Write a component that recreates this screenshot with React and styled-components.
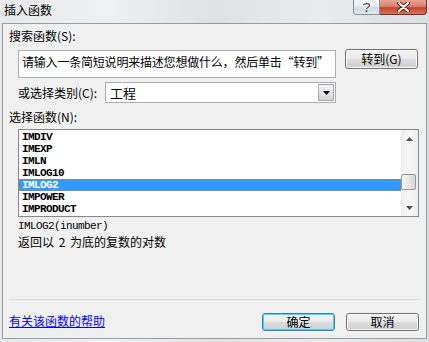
import React from 'react';
import styled, { createGlobalStyle } from 'styled-components';

const GlobalStyle = createGlobalStyle`
    html, body {
        margin: 0;
        padding: 0;
        width: 429px;
        height: 342px;
        overflow: hidden;
        background: #e3e6e9;
        font-family: "Noto Sans CJK SC", "Liberation Sans", sans-serif;
        font-size: 12px;
        color: #000;
    }
`;

const Window = styled.div`
    width: 429px;
    height: 342px;
    display: flex;
    flex-direction: column;
    background: linear-gradient(90deg, #e6e8ea 0%, #eef0f1 25%, #dfe2e5 50%, #e9ebec 75%, #dadee2 100%);
`;

const TitleBar = styled.div`
    height: 23px;
    display: flex;
    justify-content: space-between;
    align-items: flex-start;
    flex-shrink: 0;
`;

const Title = styled.div`
    padding: 3px 0 0 4px;
    line-height: 14px;
    font-size: 12px;
`;

const Caption = styled.div`
    display: flex;
    margin-right: 2px;
`;

const CaptionButton = styled.div`
    height: 15px;
    width: ${({ $w }) => $w}px;
    box-sizing: border-box;
    display: flex;
    align-items: center;
    justify-content: center;
    border: 1px solid ${({ $close }) => ($close ? '#7a2a22' : '#8c9299')};
    border-top: none;
    border-left-width: ${({ $close }) => ($close ? '0' : '1px')};
    border-radius: ${({ $close }) => ($close ? '0 0 4px 0' : '0 0 0 4px')};
    background: ${({ $close }) =>
        $close
            ? 'linear-gradient(180deg, #e5a393 0%, #d8826f 45%, #c8442f 55%, #d3735a 100%)'
            : 'linear-gradient(180deg, #f4f6f8 0%, #e8ecf0 45%, #d5dbe1 55%, #e3e8ed 100%)'};
`;

const Panel = styled.div`
    flex: 1;
    margin: 0 2px 3px 2px;
    border: 1px solid #9c9c9c;
    background: #f0f0f0;
    display: flex;
    flex-direction: column;
`;

const Label = styled.div`
    margin: ${({ $top }) => $top}px 0 0 ${({ $left }) => $left}px;
    height: 16px;
    line-height: 16px;
    white-space: nowrap;
`;

const Row = styled.div`
    display: flex;
    align-items: flex-start;
    margin-top: ${({ $top }) => $top}px;
    padding-left: 15px;
`;

const SearchBox = styled.div`
    width: 318px;
    height: 28px;
    margin-top: 1px;
    box-sizing: border-box;
    border: 1px solid #abadb3;
    background: #fff;
    padding: 3px 0 0 3px;
    line-height: 16px;
    white-space: nowrap;
    overflow: hidden;
    letter-spacing: -0.2px;
`;

const Button = styled.div`
    width: 73px;
    height: ${({ $h }) => $h}px;
    margin-left: ${({ $left }) => $left}px;
    box-sizing: border-box;
    border: 1px solid ${({ $default }) => ($default ? '#3c7fb1' : '#707070')};
    border-radius: 3px;
    box-shadow: ${({ $default }) => ($default ? 'inset 0 0 0 1px #48d1f6' : 'inset 0 0 0 1px #fcfcfc')};
    background: linear-gradient(180deg, #f2f2f2 0%, #ebebeb 49%, #dddddd 50%, #cfcfcf 100%);
    display: flex;
    align-items: center;
    justify-content: center;
    line-height: 14px;
`;

const CatLabel = styled.div`
    width: 87px;
    height: 21px;
    line-height: 21px;
    white-space: nowrap;
`;

const Select = styled.div`
    width: 231px;
    height: 21px;
    box-sizing: border-box;
    border: 1px solid #abadb3;
    background: #fff;
    display: flex;
    align-items: center;
    justify-content: space-between;
    padding: 0 1px 0 4px;
    font-size: 13px;
`;

const DropButton = styled.div`
    width: 16px;
    height: 17px;
    box-sizing: border-box;
    border: 1px solid #a7a7a7;
    background: linear-gradient(180deg, #f4f4f4 0%, #e4e4e4 50%, #d2d2d2 100%);
    display: flex;
    align-items: center;
    justify-content: center;
`;

const ListBox = styled.div`
    margin: 4px 0 0 15px;
    width: 401px;
    height: 88px;
    box-sizing: border-box;
    border: 1px solid #828790;
    background: #fff;
    display: flex;
`;

const Items = styled.div`
    flex: 1;
    padding-top: 1px;
`;

const Item = styled.div`
    height: 12px;
    line-height: 10px;
    box-sizing: border-box;
    padding-left: 2px;
    font-family: "Liberation Mono", monospace;
    font-weight: bold;
    font-size: 11px;
    letter-spacing: -0.6px;
    color: ${({ $selected }) => ($selected ? '#fff' : '#000')};
    background: ${({ $selected }) => ($selected ? '#3399ff' : 'transparent')};
    border: 1px ${({ $selected }) => ($selected ? 'dotted #cc7a33' : 'solid transparent')};
`;

const ScrollBar = styled.div`
    width: 17px;
    background: linear-gradient(90deg, #eeeeee 0%, #f7f7f7 50%, #eeeeee 100%);
    display: flex;
    flex-direction: column;
    align-items: center;
`;

const Arrow = styled.div`
    height: 17px;
    display: flex;
    align-items: center;
    justify-content: center;
`;

const Track = styled.div`
    flex: 1;
    width: 100%;
    display: flex;
    flex-direction: column;
    padding-top: 27px;
    box-sizing: border-box;
`;

const Thumb = styled.div`
    width: 15px;
    height: 16px;
    box-sizing: border-box;
    border: 1px solid #979797;
    border-radius: 2px;
    background: linear-gradient(90deg, #f3f3f3 0%, #e6e6e6 50%, #d6d6d6 100%);
`;

const Signature = styled.div`
    margin: 3px 0 0 15px;
    height: 12px;
    line-height: 12px;
    font-family: "Liberation Mono", monospace;
    font-size: 11px;
    letter-spacing: -0.6px;
`;

const Description = styled.div`
    margin: 3px 0 0 15px;
    height: 14px;
    line-height: 14px;
    word-spacing: 2px;
`;

const Separator = styled.div`
    margin: auto 6px 0 6px;
    height: 1px;
    background: #d5dce3;
`;

const Footer = styled.div`
    display: flex;
    align-items: flex-start;
    padding: 13px 0 7px 6px;
`;

const HelpLink = styled.a`
    color: #0000ff;
    text-decoration: underline;
    line-height: 14px;
    margin-top: 1px;
    width: 253px;
    cursor: pointer;
`;

const functions = ['IMDIV', 'IMEXP', 'IMLN', 'IMLOG10', 'IMLOG2', 'IMPOWER', 'IMPRODUCT'];

export default function App() {
    return (
        <>
            <GlobalStyle />
            <Window>
                <TitleBar>
                    <Title>插入函数</Title>
                    <Caption>
                        <CaptionButton $w={27}>
                            <svg width="9" height="11" viewBox="0 0 9 11">
                                <path d="M1.5 3.2 C1.5 1.2 7.5 1.2 7.5 3.4 C7.5 5.2 4.5 5.2 4.5 7" fill="none" stroke="#fff" strokeWidth="3" />
                                <path d="M1.5 3.2 C1.5 1.2 7.5 1.2 7.5 3.4 C7.5 5.2 4.5 5.2 4.5 7" fill="none" stroke="#4a4f55" strokeWidth="1.3" />
                                <rect x="3.6" y="8.3" width="1.8" height="1.8" fill="#4a4f55" />
                            </svg>
                        </CaptionButton>
                        <CaptionButton $w={47} $close>
                            <svg width="13" height="10" viewBox="0 0 13 10">
                                <path d="M2 1 L11 9 M11 1 L2 9" stroke="#5a1a12" strokeWidth="4" strokeLinecap="round" />
                                <path d="M2 1 L11 9 M11 1 L2 9" stroke="#fff" strokeWidth="2.2" strokeLinecap="round" />
                            </svg>
                        </CaptionButton>
                    </Caption>
                </TitleBar>
                <Panel>
                    <Label $top={4} $left={6}>搜索函数(S):</Label>
                    <Row $top={5}>
                        <SearchBox>请输入一条简短说明来描述您想做什么，然后单击“转到”</SearchBox>
                        <Button $h={20} $left={9}>转到(G)</Button>
                    </Row>
                    <Row $top={4}>
                        <CatLabel>或选择类别(C):</CatLabel>
                        <Select>
                            <span>工程</span>
                            <DropButton>
                                <svg width="7" height="4" viewBox="0 0 7 4">
                                    <path d="M0 0 H7 L3.5 4 Z" fill="#000" />
                                </svg>
                            </DropButton>
                        </Select>
                    </Row>
                    <Label $top={6} $left={6}>选择函数(N):</Label>
                    <ListBox>
                        <Items>
                            {functions.map((name) => (
                                <Item key={name} $selected={name === 'IMLOG2'}>
                                    {name}
                                </Item>
                            ))}
                        </Items>
                        <ScrollBar>
                            <Arrow>
                                <svg width="7" height="4" viewBox="0 0 7 4">
                                    <path d="M0 4 H7 L3.5 0 Z" fill="#4d4d4d" />
                                </svg>
                            </Arrow>
                            <Track>
                                <Thumb />
                            </Track>
                            <Arrow>
                                <svg width="7" height="4" viewBox="0 0 7 4">
                                    <path d="M0 0 H7 L3.5 4 Z" fill="#4d4d4d" />
                                </svg>
                            </Arrow>
                        </ScrollBar>
                    </ListBox>
                    <Signature>IMLOG2(inumber)</Signature>
                    <Description>返回以 2 为底的复数的对数</Description>
                    <Separator />
                    <Footer>
                        <HelpLink>有关该函数的帮助</HelpLink>
                        <Button $h={18} $left={0} $default>确定</Button>
                        <Button $h={18} $left={11}>取消</Button>
                    </Footer>
                </Panel>
            </Window>
        </>
    );
}
